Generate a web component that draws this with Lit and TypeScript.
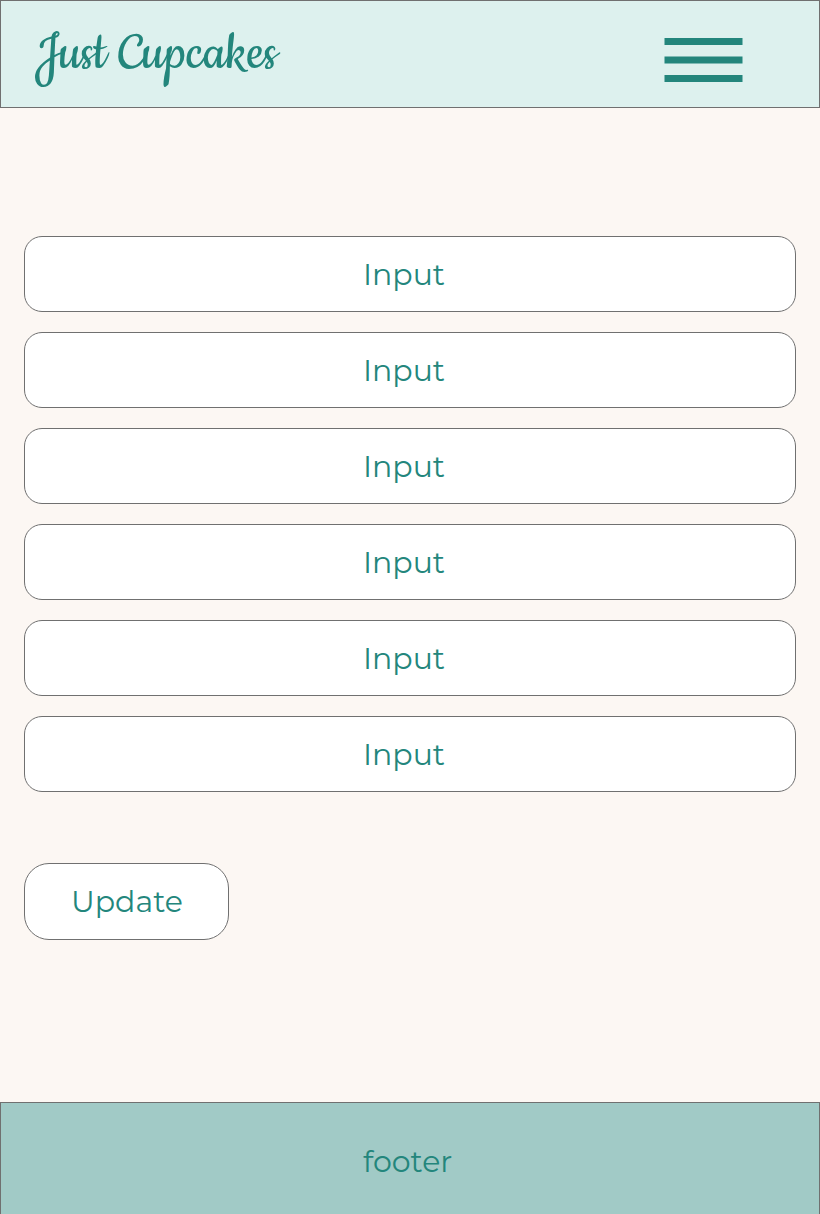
import { LitElement, html, css } from "lit";
import { customElement } from "lit/decorators.js";

@customElement("app-root")
export class AppRoot extends LitElement {
  static styles = css`
    :host { display: flex; flex-direction: column; height: 1214px; box-sizing: border-box; overflow: hidden; background: #fcf7f3; color: #23867c; font: 30px/38px "Montserrat", "Open Sans", sans-serif; }
    * { box-sizing: border-box; }
    header { height: 108px; flex: none; display: flex; justify-content: space-between; align-items: flex-start; background: #ddf1ee; border: 1px solid #707070; padding: 17px 76px 0 34px; }
    .logo { font: 60px/72px "Cookie", "Liberation Serif", cursive; white-space: nowrap; }
    .menu { display: block; width: 79px; height: 44px; margin-top: 20px; fill: currentColor; }
    form { flex: 1; display: flex; flex-direction: column; align-items: flex-start; gap: 20px; padding: 128px 24px 0; }
    .field { width: 100%; height: 76px; border: 1px solid #707070; border-radius: 18px; background: #fff; padding: 19px 0 0 338px; }
    .update { height: 77px; width: 205px; margin-top: 51px; border: 1px solid #707070; border-radius: 25px; background: #fff; padding: 19px 0 0 46px; }
    footer { height: 112px; flex: none; background: #a1cac6; border: 1px solid #707070; border-bottom: 0; padding: 40px 0 0 362px; }
  `;
  render() {
    return html`
      <header>
        <div class="logo">Just Cupcakes</div>
        <svg class="menu" viewBox="0 0 79 44"><rect x=".5" width="78" height="7"/><rect x=".5" y="18.5" width="78" height="7"/><rect x=".5" y="37" width="78" height="7"/></svg>
      </header>
      <form>
        ${Array.from({ length: 6 }, () => html`<div class="field">Input</div>`)}
        <div class="update">Update</div>
      </form>
      <footer>footer</footer>
    `;
  }
}
